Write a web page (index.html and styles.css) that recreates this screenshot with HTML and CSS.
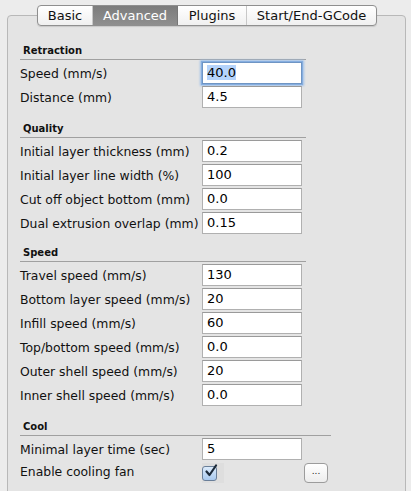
FILE: index.html
```html
<!DOCTYPE html>
<html>
<head>
<meta charset="utf-8">
<link rel="stylesheet" href="styles.css">
</head>
<body>
<div class="window">
  <div class="tabs">
    <div class="tab">Basic</div>
    <div class="tab selected">Advanced</div>
    <div class="tab">Plugins</div>
    <div class="tab last">Start/End-GCode</div>
  </div>
  <div class="box">
    <div class="section">
      <div class="title">Retraction</div>
      <div class="row"><span class="label">Speed (mm/s)</span><span class="field focused"><span class="sel">40.0</span></span></div>
      <div class="row"><span class="label">Distance (mm)</span><span class="field">4.5</span></div>
    </div>
    <div class="section tight">
      <div class="title">Quality</div>
      <div class="row"><span class="label">Initial layer thickness (mm)</span><span class="field">0.2</span></div>
      <div class="row"><span class="label">Initial layer line width (%)</span><span class="field">100</span></div>
      <div class="row"><span class="label">Cut off object bottom (mm)</span><span class="field">0.0</span></div>
      <div class="row"><span class="label">Dual extrusion overlap (mm)</span><span class="field">0.15</span></div>
    </div>
    <div class="section">
      <div class="title">Speed</div>
      <div class="row"><span class="label">Travel speed (mm/s)</span><span class="field">130</span></div>
      <div class="row"><span class="label">Bottom layer speed (mm/s)</span><span class="field">20</span></div>
      <div class="row"><span class="label">Infill speed (mm/s)</span><span class="field">60</span></div>
      <div class="row"><span class="label">Top/bottom speed (mm/s)</span><span class="field">0.0</span></div>
      <div class="row"><span class="label">Outer shell speed (mm/s)</span><span class="field">20</span></div>
      <div class="row"><span class="label">Inner shell speed (mm/s)</span><span class="field">0.0</span></div>
    </div>
    <div class="section cool">
      <div class="title">Cool</div>
      <div class="row"><span class="label">Minimal layer time (sec)</span><span class="field">5</span></div>
      <div class="row check-row">
        <span class="label">Enable cooling fan</span>
        <span class="checkwrap"><span class="checkbox"><svg width="15" height="15" viewBox="0 0 15 15"><path d="M3.5 7.5 L6.5 11 L13 1.5" fill="none" stroke="#1c2a3a" stroke-width="2.2" stroke-linecap="round" stroke-linejoin="round"/></svg></span></span>
        <span class="dots">...</span>
      </div>
    </div>
  </div>
</div>
</body>
</html>
```

FILE: styles.css
```css
html, body {
  margin: 0;
  padding: 0;
  background: #ececec;
  font-family: "DejaVu Sans", "Liberation Sans", sans-serif;
  color: #111;
  overflow: hidden;
}

.window {
  width: 411px;
  height: 491px;
  padding: 5px 0 0 7px;
  box-sizing: border-box;
}

.tabs {
  position: relative;
  z-index: 2;
  display: flex;
  margin-left: 30px;
  width: 340px;
  height: 21px;
  border: 1px solid #8f8f8f;
  border-radius: 4px;
  box-sizing: border-box;
  overflow: hidden;
  background: linear-gradient(#ffffff, #f0f0f0);
  box-shadow: 0 1px 1px rgba(0,0,0,0.12);
}

.tab {
  display: flex;
  align-items: center;
  justify-content: center;
  font-size: 13px;
  color: #111;
  height: 19px;
  border-right: 1px solid #c8c8c8;
}
.tab:nth-child(1) { width: 54px; }
.tab:nth-child(2) { width: 84px; }
.tab:nth-child(3) { width: 68px; }
.tab.last { flex: 1; border-right: none; }
.tab.selected {
  background: linear-gradient(#7c7c7c, #8f8f8f);
  color: #fff;
  border-right: 1px solid #777;
}

.box {
  margin-top: -11px;
  width: 399px;
  height: 500px;
  box-sizing: border-box;
  border: 1px solid #b8b8b8;
  border-radius: 4px;
  background: #e4e4e4;
  padding: 27px 0 0 12px;
}

.section {
  display: flex;
  flex-direction: column;
  gap: 2px;
  width: 286px;
  margin-bottom: 13px;
}
.section.tight { margin-bottom: 11px; }
.section.cool { width: 311px; }

.title {
  font-size: 10px;
  font-weight: bold;
  line-height: 13px;
  height: 17px;
  padding: 1px 0 0 3px;
  box-sizing: border-box;
  border-bottom: 1px solid #a0a0a0;
  color: #111;
}

.row {
  display: flex;
  align-items: center;
  height: 22px;
}

.label {
  width: 182px;
  font-size: 12.4px;
  white-space: nowrap;
  color: #111;
}

.field {
  width: 100px;
  height: 22px;
  box-sizing: border-box;
  background: #fff;
  border: 1px solid #b0b0b0;
  border-top-color: #9a9a9a;
  font-size: 13px;
  line-height: 20px;
  padding-left: 4px;
  color: #000;
}
.field.focused {
  border-color: #6f95c4;
  box-shadow: 0 0 0 1px #86aee0, 0 0 2px 2px #9ec0ea;
}
.sel {
  background: #b5d3fb;
}

.check-row {
  height: 20px;
  align-items: flex-start;
}
.check-row .label { line-height: 20px; }

.checkwrap {
  width: 22px;
  height: 20px;
  display: flex;
  align-items: center;
  background: #dedede;
  margin-top: 1px;
}

.checkbox {
  width: 15px;
  height: 15px;
  box-sizing: border-box;
  border: 1px solid #6a7f99;
  border-radius: 3px;
  background: linear-gradient(#dcebfb, #a9c9ee);
  position: relative;
}
.checkbox svg {
  position: absolute;
  left: 0;
  top: -3px;
}

.dots {
  margin-left: 80px;
  margin-top: 1px;
  width: 24px;
  height: 20px;
  box-sizing: border-box;
  border: 1px solid #9c9c9c;
  border-radius: 4px;
  background: linear-gradient(#ffffff, #ededed);
  font-size: 9px;
  text-align: center;
  line-height: 14px;
  color: #222;
}
```
